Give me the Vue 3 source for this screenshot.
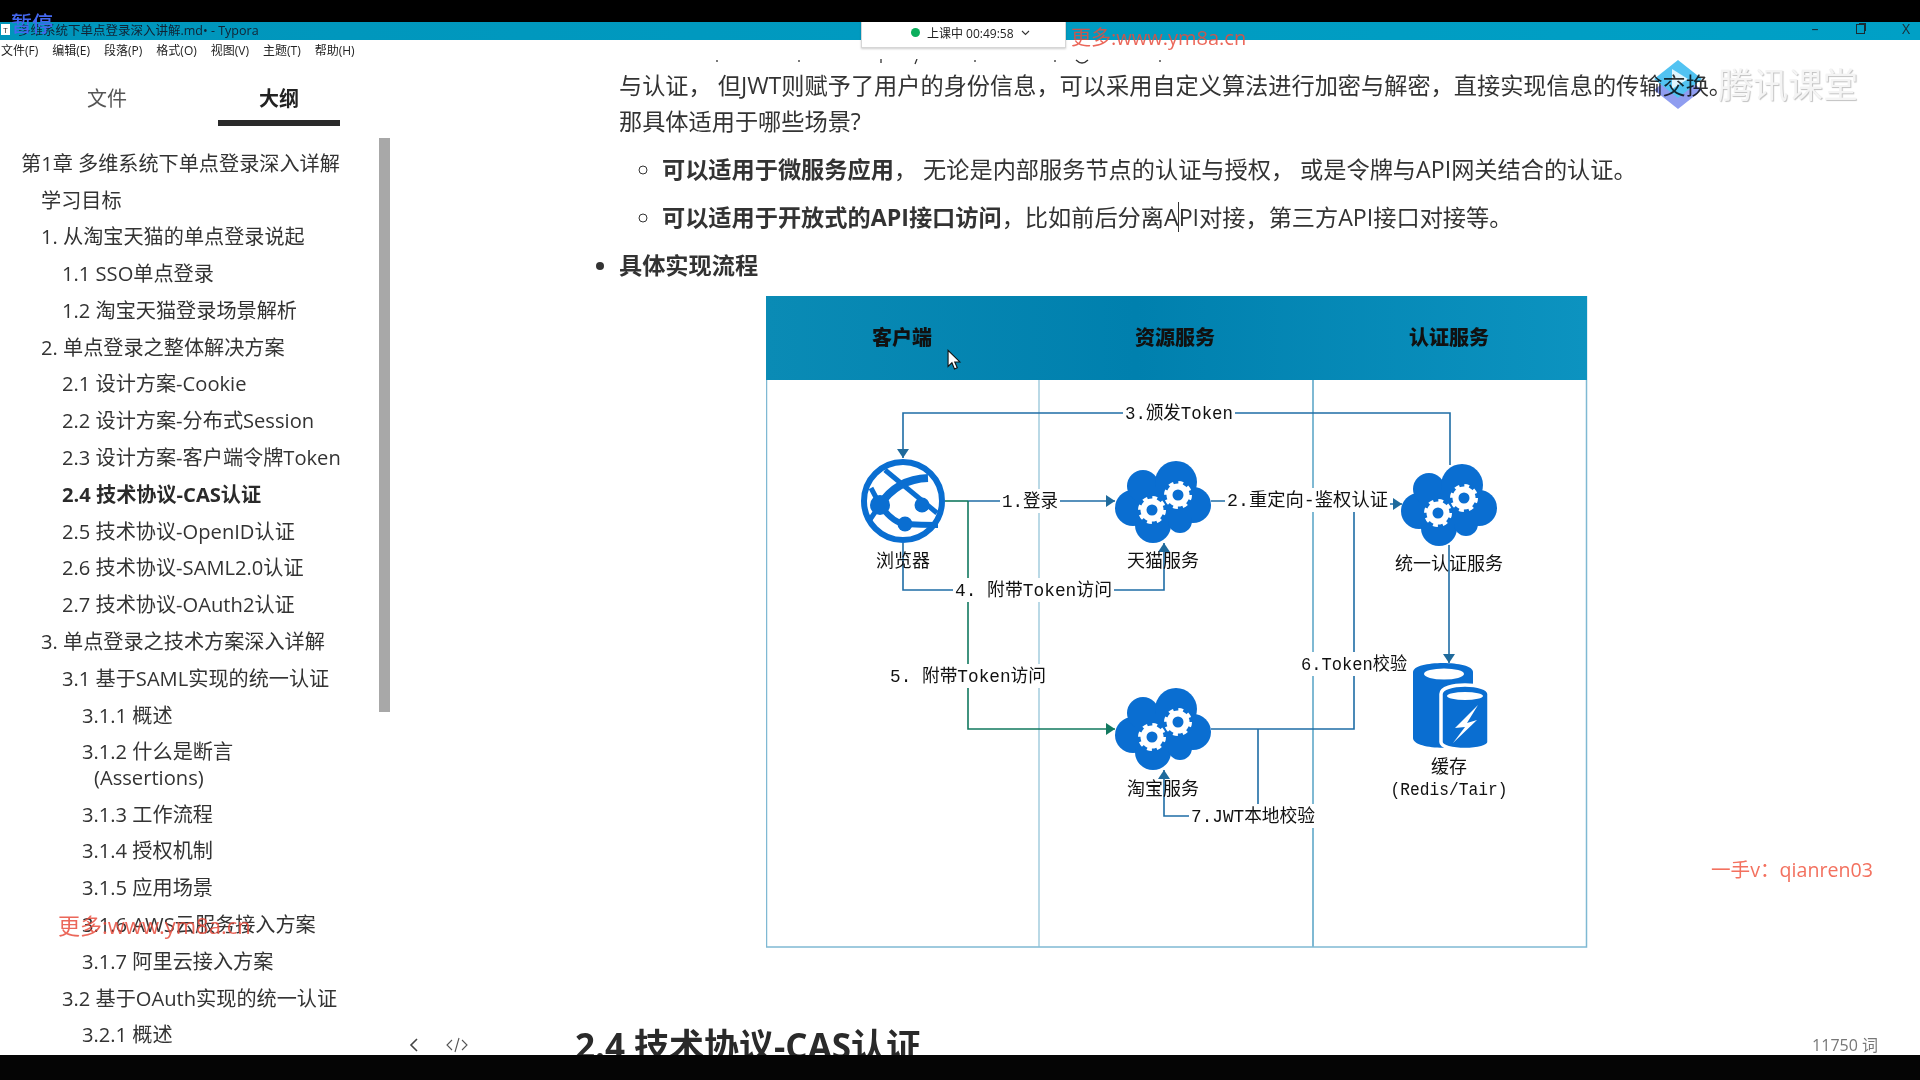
<script setup>
const menus = ['文件(F)', '编辑(E)', '段落(P)', '格式(O)', '视图(V)', '主题(T)', '帮助(H)'];

const outline = [
  { t: '第1章 多维系统下单点登录深入详解', l: 0 },
  { t: '学习目标', l: 1 },
  { t: '1. 从淘宝天猫的单点登录说起', l: 1 },
  { t: '1.1 SSO单点登录', l: 2 },
  { t: '1.2 淘宝天猫登录场景解析', l: 2 },
  { t: '2. 单点登录之整体解决方案', l: 1 },
  { t: '2.1 设计方案-Cookie', l: 2 },
  { t: '2.2 设计方案-分布式Session', l: 2 },
  { t: '2.3 设计方案-客户端令牌Token', l: 2 },
  { t: '2.4 技术协议-CAS认证', l: 2, active: true },
  { t: '2.5 技术协议-OpenID认证', l: 2 },
  { t: '2.6 技术协议-SAML2.0认证', l: 2 },
  { t: '2.7 技术协议-OAuth2认证', l: 2 },
  { t: '3. 单点登录之技术方案深入详解', l: 1 },
  { t: '3.1 基于SAML实现的统一认证', l: 2 },
  { t: '3.1.1 概述', l: 3 },
  { t: '3.1.2 什么是断言\n(Assertions)', l: 3, hang: true },
  { t: '3.1.3 工作流程', l: 3 },
  { t: '3.1.4 授权机制', l: 3 },
  { t: '3.1.5 应用场景', l: 3 },
  { t: '3.1.6 AWS云服务接入方案', l: 3 },
  { t: '3.1.7 阿里云接入方案', l: 3 },
  { t: '3.2 基于OAuth实现的统一认证', l: 2 },
  { t: '3.2.1 概述', l: 3 },
];

const heads = [
  { t: '客户端', x: 136 },
  { t: '资源服务', x: 409 },
  { t: '认证服务', x: 683 },
];

// x, y (centre line) and width as measured on the diagram
const labels = [
  { t: '3.颁发Token', x: 359, y: 118, w: 108 },
  { t: '1.登录', x: 236, y: 206, w: 56 },
  { t: '2.重定向-鉴权认证', x: 461, y: 205, w: 161 },
  { t: '4. 附带Token访问', x: 189, y: 295, w: 157 },
  { t: '5. 附带Token访问', x: 124, y: 381, w: 156 },
  { t: '6.Token校验', x: 535, y: 369, w: 106 },
  { t: '7.JWT本地校验', x: 425, y: 521, w: 124 },
];

const nodeLabels = [
  { t: '浏览器', x: 137, y: 266 },
  { t: '天猫服务', x: 397, y: 266 },
  { t: '统一认证服务', x: 683, y: 269 },
  { t: '淘宝服务', x: 397, y: 494 },
  { t: '缓存', x: 683, y: 472 },
  { t: '(Redis/Tair)', x: 683, y: 494, w: 117 },
];

const clouds = [
  { x: 397, y: 207 },
  { x: 683, y: 210 },
  { x: 397, y: 434 },
];
</script>

<template>
  <div class="screen">
    <div class="black-top"></div>

    <header class="titlebar">
      <span class="app-icon">T</span>
      <span class="title">多维系统下单点登录深入讲解.md• - Typora</span>
      <div class="win-btns">
        <span>–</span>
        <span class="restore"></span>
        <span>X</span>
      </div>
    </header>

    <nav class="menubar">
      <span v-for="m in menus" :key="m">{{ m }}</span>
    </nav>

    <div class="main">
      <aside class="sidebar">
        <div class="tabs">
          <div class="tab"><span>文件</span></div>
          <div class="tab on"><span>大纲</span></div>
        </div>
        <ul class="outline">
          <li
            v-for="o in outline"
            :key="o.t"
            :class="['lv' + o.l, { active: o.active, hang: o.hang }]"
          >{{ o.t }}</li>
        </ul>
        <div class="scroll-thumb"></div>
      </aside>

      <section class="content">
        <p class="para">与认证， 但JWT则赋予了用户的身份信息，可以采用自定义算法进行加密与解密，直接实现信息的传输交换。<br>那具体适用于哪些场景?</p>
        <ul class="sub">
          <li><b>可以适用于微服务应用</b>， 无论是内部服务节点的认证与授权， 或是令牌与API网关结合的认证。</li>
          <li><b>可以适用于开放式的API接口访问</b>，比如前后分离A<i class="caret"></i>PI对接，第三方API接口对接等。</li>
        </ul>
        <ul class="top-list">
          <li><b>具体实现流程</b></li>
        </ul>

        <svg class="diagram" width="823" height="653" viewBox="0 0 823 653">
          <defs>
            <linearGradient id="headFill" x1="0" x2="1" y1="0" y2="0">
              <stop offset="0" stop-color="#0a8bb5" />
              <stop offset="0.45" stop-color="#0080ae" />
              <stop offset="1" stop-color="#0c93c0" />
            </linearGradient>
            <marker id="arrowBlue" markerUnits="userSpaceOnUse" markerWidth="10" markerHeight="12" refX="9" refY="6" orient="auto">
              <path d="M0 0 L9 6 L0 12 Z" fill="#1f6a9c" />
            </marker>
            <marker id="arrowGreen" markerUnits="userSpaceOnUse" markerWidth="10" markerHeight="12" refX="9" refY="6" orient="auto">
              <path d="M0 0 L9 6 L0 12 Z" fill="#12795f" />
            </marker>
            <g id="cloud">
              <circle cx="-30" cy="5" r="18" />
              <circle cx="-20" cy="-17" r="16" />
              <circle cx="13" cy="-21" r="21" />
              <circle cx="30" cy="2" r="18" />
              <circle cx="-10" cy="22" r="18" />
              <circle cx="17" cy="18" r="12" />
              <rect x="-28" y="-16" width="56" height="34" />
            </g>
            <g id="gear">
              <circle r="8.5" fill="none" stroke="#fff" stroke-width="6" />
              <circle r="12" fill="none" stroke="#fff" stroke-width="4" stroke-dasharray="4.7 4.72" />
            </g>
          </defs>

          <rect x="0.5" y="0" width="820" height="651" fill="#fff" stroke="#7fb9d3" stroke-width="1.5" />
          <rect x="0" y="0" width="821" height="84" fill="url(#headFill)" />
          <line x1="273" y1="84" x2="273" y2="651" stroke="#8cc0d6" stroke-width="1.2" />
          <line x1="547" y1="84" x2="547" y2="651" stroke="#7fb9d3" stroke-width="2" />
          <text v-for="h in heads" :key="h.t" class="head" :x="h.x" y="41">{{ h.t }}</text>

          <!-- connectors -->
          <g fill="none" stroke="#1f6da6" stroke-width="1.6">
            <path d="M684 169 V117 H137 V162" marker-end="url(#arrowBlue)" />
            <path d="M202 205 H349" marker-end="url(#arrowBlue)" />
            <path d="M445 205 H588 V208 H636" marker-end="url(#arrowBlue)" />
            <path d="M137 247 V294 H398 V247" marker-end="url(#arrowBlue)" />
            <path d="M683 249 V367" marker-end="url(#arrowBlue)" />
            <path d="M445 433 H588 V209" />
            <path d="M492 433 V520 H398 V474" marker-end="url(#arrowBlue)" />
          </g>
          <g fill="none" stroke="#12795f" stroke-width="1.6">
            <path d="M179 205 H202" />
            <path d="M202 205 V433 H349" marker-end="url(#arrowGreen)" />
          </g>

          <!-- browser globe -->
          <g transform="translate(137 205)" fill="none" stroke="#0a6ed1">
            <circle r="39" fill="#fff" stroke-width="6" />
            <path d="M-18 -31 L34 12" stroke-width="5" />
            <path d="M25 -23 Q-6 -22 -23 4" stroke-width="8" />
            <path d="M-23 4 Q-10 22 2 23 Q18 24 35 24" stroke-width="6" />
            <path d="M-23 4 L-32 -13 M-23 4 L-34 20" stroke-width="5" />
            <g fill="#0a6ed1" stroke="none">
              <circle cx="-23" cy="4" r="10" />
              <circle cx="19" cy="4" r="7.5" />
              <circle cx="2" cy="23" r="7.5" />
            </g>
          </g>

          <!-- service clouds -->
          <g v-for="c in clouds" :key="c.y + c.x" :transform="`translate(${c.x} ${c.y})`">
            <use href="#cloud" fill="#0a6ed1" />
            <use href="#gear" x="-11" y="7" />
            <use href="#gear" x="15" y="-8" />
          </g>

          <!-- cache -->
          <g>
            <path d="M647 376 C647 364 707 364 707 376 V442 C707 455 647 455 647 442 Z" fill="#0a6ed1" />
            <ellipse cx="678" cy="378" rx="20" ry="5.5" fill="#fff" />
            <path d="M675 398 C675 386 723 386 723 398 V446 C723 456 675 456 675 446 Z" fill="#0a6ed1" stroke="#fff" stroke-width="3.5" />
            <ellipse cx="699" cy="400" rx="18" ry="4" fill="#fff" />
            <polygon points="712,409 689,432 699,431 687,447 711,424 701,427" fill="#fff" />
          </g>

          <g v-for="l in labels" :key="l.t">
            <rect :x="l.x - 2" :y="l.y - 13" :width="l.w + 4" height="24" fill="#fff" />
            <text class="edge" :x="l.x" :y="l.y" :textLength="l.w" lengthAdjust="spacingAndGlyphs">{{ l.t }}</text>
          </g>
          <text
            v-for="n in nodeLabels"
            :key="n.t"
            class="node"
            :x="n.x"
            :y="n.y"
            :textLength="n.w"
            lengthAdjust="spacingAndGlyphs"
          >{{ n.t }}</text>
        </svg>

        <h2 class="next-heading">2.4 技术协议-CAS认证</h2>

        <div class="foot-icons">
          <svg width="12" height="16" viewBox="0 0 12 16"><path d="M9 2 L3 8 L9 14" fill="none" stroke="#444" stroke-width="1.6" /></svg>
          <svg width="22" height="16" viewBox="0 0 22 16"><path d="M6 3 L1 8 L6 13 M16 3 L21 8 L16 13 M13 1 L9 15" fill="none" stroke="#555" stroke-width="1.1" /></svg>
        </div>
        <div class="word-count">11750 词</div>
      </section>
    </div>

    <div class="black-bottom"></div>

    <!-- descenders of the line scrolled away under the menu -->
    <svg class="clipped-line" width="470" height="6" viewBox="0 0 470 6">
      <path d="M17 1 V3 M99 1 V3 M181 0 V4 M217 0 L215 5 M275 1 V3 M355 1 V3 M376 1 Q382 7 388 1 M460 1 V3" fill="none" stroke="#333" stroke-width="1.3" />
    </svg>

    <!-- things the recording software puts over the window -->
    <div class="pause">暂停</div>
    <div class="live-pill">
      <i class="dot"></i>
      <span>上课中 00:49:58</span>
      <svg width="9" height="6" viewBox="0 0 9 6"><path d="M1 1 L4.5 4.5 L8 1" fill="none" stroke="#333" stroke-width="1.1" /></svg>
    </div>
    <div class="mark mark-top">更多:www.ym8a.cn</div>
    <div class="mark mark-left">更多:www.ym8a.cn</div>
    <div class="seller">一手v：qianren03</div>
    <div class="tencent">
      <svg width="52" height="52" viewBox="0 0 52 52">
        <polygon points="26,12 50,31 26,50 2,31" fill="#8f9df0" />
        <polygon points="26,1 50,20 26,39 2,20" fill="#52c3f2" />
        <polygon points="20,10 36,20 20,30" fill="#dff5fd" />
      </svg>
      <span>腾讯课堂</span>
    </div>
    <svg class="cursor" width="15" height="22" viewBox="0 0 14 20">
      <path d="M1 1 V16 L4.6 12.6 L7 18.4 L9.6 17.2 L7.2 11.8 H12 Z" fill="#fff" stroke="#111" stroke-width="1" />
    </svg>
  </div>
</template>

<style scoped>
.screen {
  position: relative;
  width: 1920px;
  height: 1080px;
  overflow: hidden;
  display: flex;
  flex-direction: column;
  background: #fff;
  color: #333;
  font-family: "Open Sans", "Noto Sans CJK SC", sans-serif;
}

.black-top {
  height: 22px;
  flex: none;
  background: #000;
}

.black-bottom {
  height: 25px;
  flex: none;
  background: #050505;
}

.titlebar {
  height: 18px;
  flex: none;
  box-sizing: border-box;
  padding-bottom: 4px;
  display: flex;
  align-items: center;
  background: linear-gradient(90deg, #0095bb, #00a0c6);
  font-size: 12.5px;
  color: #123;
}

.app-icon {
  width: 9px;
  height: 11px;
  margin: 0 8px 0 1px;
  background: #fff;
  color: #222;
  font-size: 8px;
  line-height: 11px;
  text-align: center;
}

.win-btns {
  margin-left: auto;
  display: flex;
  gap: 36px;
  align-items: center;
  padding-right: 9px;
  font-size: 14px;
  line-height: 14px;
  color: #1b2b33;
}

.win-btns span {
  width: 10px;
  text-align: center;
}

.win-btns .restore {
  width: 7px;
  height: 8px;
  border: 1px solid #1b2b33;
  box-shadow: 2px -2px 0 -1px #1b2b33;
}

.menubar {
  height: 22px;
  flex: none;
  box-sizing: border-box;
  padding: 0 0 2px 1px;
  display: flex;
  gap: 14px;
  align-items: center;
  font-size: 12px;
  color: #222;
}

.main {
  flex: 1;
  min-height: 0;
  display: flex;
}

.sidebar {
  position: relative;
  width: 400px;
  flex: none;
  overflow: hidden;
}

.tabs {
  display: flex;
  padding: 24px 0 0 21px;
}

.tab {
  width: 172px;
  text-align: center;
  font-size: 20px;
  line-height: 26px;
  color: #555;
}

.tab span {
  display: inline-block;
}

.tab.on {
  color: #222;
  font-weight: 700;
}

.tab.on span {
  width: 122px;
  padding-bottom: 8px;
  border-bottom: 6px solid #2a2a2a;
}

.outline {
  list-style: none;
  margin: 19.2px 0 0;
  padding: 0;
  font-size: 20.15px;
  line-height: 25.6px;
  color: #333;
}

.outline li {
  padding: 5.6px 0;
  white-space: pre-line;
}

.lv0 { padding-left: 21px !important; }
.lv1 { padding-left: 41px !important; }
.lv2 { padding-left: 62px !important; }
.lv3 { padding-left: 82px !important; }

.outline li.hang {
  padding-left: 94px !important;
  text-indent: -12px;
}

.outline li.active {
  font-weight: 700;
  color: #2a2a2a;
}

.scroll-thumb {
  position: absolute;
  left: 379px;
  top: 76px;
  width: 11px;
  height: 574px;
  background: #a8a8a8;
}

.content {
  position: relative;
  flex: 1;
  min-width: 0;
  overflow: hidden;
  padding: 5px 0 0 219px;
  font-size: 23.2px;
  line-height: 36px;
  color: #333;
}

.para {
  margin: 0;
  white-space: nowrap;
}

.sub,
.top-list {
  margin: 12px 0 0;
  padding: 0;
  white-space: nowrap;
}

.sub {
  list-style: circle;
  padding-left: 43px;
}

.sub li + li {
  margin-top: 12px;
}

.top-list {
  margin-top: 12px;
}

.caret {
  display: inline-block;
  width: 1px;
  height: 30px;
  margin: 0 -0.5px;
  vertical-align: -6px;
  background: #333;
}

.diagram {
  display: block;
  margin: 13px 0 0 147px;
}

.head {
  font-size: 20px;
  font-weight: 900;
  fill: #111;
  text-anchor: middle;
  dominant-baseline: central;
}

.edge,
.node {
  font-family: "Liberation Mono", "Noto Sans CJK SC", monospace;
  font-size: 18px;
  fill: #111;
  dominant-baseline: central;
  white-space: pre;
}

.node {
  text-anchor: middle;
}

.next-heading {
  margin: 74px 0 0 -44px;
  font-size: 35px;
  line-height: 46px;
  font-weight: 700;
  color: #2a2a2a;
  white-space: nowrap;
}

.foot-icons {
  position: absolute;
  left: 8px;
  bottom: 2px;
  display: flex;
  gap: 26px;
  align-items: center;
}

.word-count {
  position: absolute;
  right: 42px;
  bottom: 0;
  font-size: 16px;
  line-height: 20px;
  color: #777;
}

.clipped-line {
  position: absolute;
  left: 700px;
  top: 59px;
}

.pause {
  position: absolute;
  left: 11px;
  top: 11px;
  font-size: 21px;
  line-height: 24px;
  font-weight: 500;
  color: #4468f0;
}

.live-pill {
  position: absolute;
  left: 861px;
  top: 22px;
  width: 205px;
  height: 26px;
  box-sizing: border-box;
  display: flex;
  align-items: center;
  padding: 0 0 4px 49px;
  gap: 7px;
  background: #fff;
  border: 1px solid #d6d6d6;
  border-top: 0;
  box-shadow: 0 1px 2px rgba(0, 0, 0, 0.2);
  font-size: 12px;
  color: #222;
}

.dot {
  width: 9px;
  height: 9px;
  border-radius: 50%;
  background: #0cae5d;
}

.mark {
  position: absolute;
  color: rgba(232, 76, 61, 0.85);
  white-space: nowrap;
}

.mark-top {
  left: 1071px;
  top: 25px;
  font-size: 20px;
  line-height: 26px;
}

.mark-left {
  left: 58px;
  top: 910px;
  font-size: 22px;
  line-height: 30px;
}

.seller {
  position: absolute;
  left: 1711px;
  top: 856px;
  font-size: 19.6px;
  line-height: 28px;
  color: #f3715f;
  white-space: nowrap;
}

.tencent {
  position: absolute;
  left: 1652px;
  top: 59px;
  display: flex;
  gap: 14px;
  align-items: center;
  font-size: 35px;
  line-height: 44px;
  white-space: nowrap;
}

.tencent svg {
  mix-blend-mode: multiply;
}

.tencent span {
  color: #f3f3f3;
  opacity: 0.9;
  text-shadow: 1px 1px 1px #bbb;
}

.cursor {
  position: absolute;
  left: 947px;
  top: 349px;
}
</style>

<style>
html,
body {
  margin: 0;
  overflow: hidden;
}
</style>
